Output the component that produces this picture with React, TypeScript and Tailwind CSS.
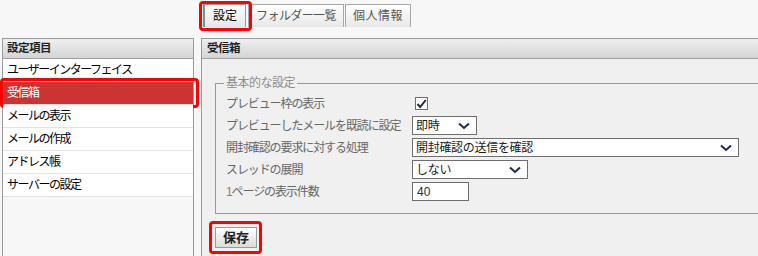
import React from "react";

const Chevron = () => (
  <svg width="12" height="8" viewBox="0 0 12 8" className="shrink-0">
    <polyline points="1,1.5 6,6 11,1.5" fill="none" stroke="#1c2b4a" strokeWidth="2" />
  </svg>
);

const Select = ({ text, w }: { text: string; w: string }) => (
  <div className={`${w} shrink-0 h-[19px] bg-white border border-[#6e6e6e] flex items-center justify-between pl-[3px] pr-[6px] text-[12px] text-[#1a1a1a] tracking-[-0.3px]`}>
    <span>{text}</span>
    <Chevron />
  </div>
);

const menu = ["ユーザーインターフェイス", "受信箱", "メールの表示", "メールの作成", "アドレス帳", "サーバーの設定"];

export default function App() {
  return (
    <div className="w-[758px] h-[256px] overflow-hidden bg-[#f7f7f7] font-['Liberation_Sans','Noto_Sans_CJK_JP',sans-serif] leading-none">
      {/* tabs */}
      <div className="flex pt-[4px] pl-[203px] h-[38px]">
        <div className="relative">
          <div className="h-[23px] w-[43px] flex items-center justify-center border-t border-r border-l-2 border-[#9a9a9a] border-l-[#8a8a8a] bg-linear-to-b from-white to-[#e6e6e6] text-[12px] text-black">
            設定
          </div>
          <div className="absolute -left-[4px] -top-[3px] w-[53px] h-[30px] border-[3px] border-[#ff0000] rounded-[4px]" />
        </div>
        <div className="ml-[2px] h-[23px] w-[96px] flex items-center justify-center border-t border-x border-[#a8a8a8] bg-linear-to-b from-white to-[#e8e8e8] text-[12px] text-[#555] tracking-[-0.6px]">
          フォルダー一覧
        </div>
        <div className="ml-[1px] h-[23px] w-[66px] flex items-center justify-center border-t border-x border-[#a8a8a8] bg-linear-to-b from-white to-[#e8e8e8] text-[12px] text-[#555] tracking-[0.5px]">
          個人情報
        </div>
      </div>

      <div className="flex items-start">
        {/* left panel */}
        <div className="ml-[2px] w-[192px] shrink-0 h-[220px] border-x border-t border-[#9a9a9a] bg-[#f7f7f7] relative">
          <div className="h-[20px] border-b border-[#a0a0a0] bg-linear-to-b from-[#f0f0f0] to-[#d4d4d4] flex items-center pl-[4px] text-[11.5px] font-bold text-[#222] tracking-[-0.5px]">
            設定項目
          </div>
          {menu.map((m) => (
            <div
              key={m}
              className={`relative h-[23px] border-b border-[#e4e4e4] flex items-center pl-[4px] text-[12px] tracking-[-1.5px] ${
                m === "受信箱" ? "bg-[#cc3333] text-white" : "bg-white text-black"
              }`}
            >
              {m}
              {m === "受信箱" && (
                <div className="absolute -left-[3px] -top-[4px] w-[199px] h-[30px] border-[3px] border-[#ff0000] rounded-[4px]" />
              )}
            </div>
          ))}
        </div>

        {/* right panel */}
        <div className="ml-[7px] flex-1 min-w-0 overflow-hidden h-[220px] border-l border-t border-[#9a9a9a] bg-[#f0f0f0]">
          <div className="h-[20px] border-b border-[#a0a0a0] bg-linear-to-b from-[#f0f0f0] to-[#d4d4d4] flex items-center pl-[5px] text-[11.5px] font-bold text-[#222] tracking-[-0.5px]">
            受信箱
          </div>
          <div className="relative ml-[13px] mt-[24px] w-[580px] border border-[#999] px-[10px] pb-[12px] pt-[10px]">
            <span className="absolute left-[8px] -top-[8px] px-[2px] bg-[#f0f0f0] text-[12px] leading-[14px] text-[#8c8c8c] tracking-[-0.5px]">
              基本的な設定
            </span>
            <div className="flex flex-col gap-[3px] text-[12px] text-[#666] tracking-[-1.1px]">
              <div className="h-[19px] flex items-center">
                <span className="w-[186px] shrink-0 whitespace-nowrap">プレビュー枠の表示</span>
                <div className="ml-[3px] w-[13px] h-[13px] bg-white border border-[#6e6e6e] flex items-center justify-center">
                  <svg width="11" height="10" viewBox="0 0 11 10">
                    <polyline points="1.5,5 4.2,8 9.8,1" fill="none" stroke="#1c2b4a" strokeWidth="2" />
                  </svg>
                </div>
              </div>
              <div className="h-[19px] flex items-center">
                <span className="w-[186px] shrink-0 whitespace-nowrap">プレビューしたメールを既読に設定</span>
                <Select text="即時" w="w-[65px]" />
              </div>
              <div className="h-[19px] flex items-center">
                <span className="w-[186px] shrink-0 whitespace-nowrap">開封確認の要求に対する処理</span>
                <Select text="開封確認の送信を確認" w="w-[327px]" />
              </div>
              <div className="h-[19px] flex items-center">
                <span className="w-[186px] shrink-0 whitespace-nowrap">スレッドの展開</span>
                <Select text="しない" w="w-[116px]" />
              </div>
              <div className="h-[19px] flex items-center">
                <span className="w-[186px] shrink-0 whitespace-nowrap">
                  <span className="text-[#b5733b]">1</span>ページの表示件数
                </span>
                <div className="w-[57px] shrink-0 h-[19px] bg-white border border-[#6e6e6e] flex items-center pl-[4px] text-[12px] text-[#2a2a3a] tracking-normal">
                  40
                </div>
              </div>
            </div>
          </div>
          <div className="ml-[13px] mt-[13px] relative w-[42px] h-[21px]">
            <div className="w-[42px] h-[21px] border border-[#9a9a9a] bg-linear-to-b from-white to-[#dcdcdc] flex items-center justify-center text-[13px] font-bold text-[#222]">
              保存
            </div>
            <div className="absolute -left-[6px] -top-[6px] w-[53px] h-[33px] border-[3px] border-[#ff0000] rounded-[4px]" />
          </div>
        </div>
      </div>
    </div>
  );
}
